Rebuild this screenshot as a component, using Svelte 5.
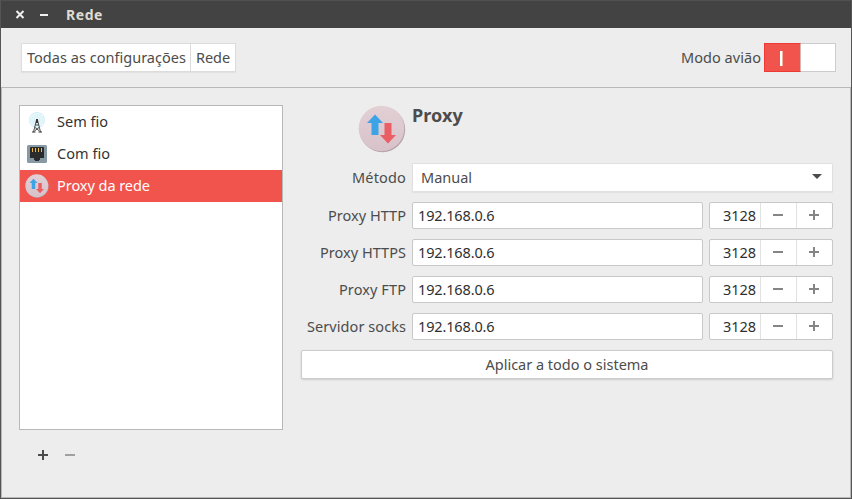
<script>
  const sections = [
    { id: 'wifi', label: 'Sem fio', width: 51 },
    { id: 'wired', label: 'Com fio', width: 53 },
    { id: 'proxy', label: 'Proxy da rede', width: 93 }
  ];
  const selected = 'proxy';
  const proxies = [
    { label: 'Proxy HTTP', width: 78 },
    { label: 'Proxy HTTPS', width: 86 },
    { label: 'Proxy FTP', width: 67 },
    { label: 'Servidor socks', width: 99 }
  ].map((p) => ({ ...p, host: '192.168.0.6', port: '3128' }));

  // Tracks a label so that it fills the given width in pixels.
  function fit(node, width) {
    const natural = node.getBoundingClientRect().width;
    const spacing = (width - natural) / node.textContent.length;
    node.style.letterSpacing = `${spacing}px`;
  }
</script>

{#snippet proxyIcon(size)}
  <svg width={size} height={size} viewBox="0 0 48 48">
    <defs>
      <linearGradient id="disc{size}" x1="0" y1="0" x2="0" y2="1">
        <stop offset="0" stop-color="#e2d0d5" />
        <stop offset="1" stop-color="#d8c2ca" />
      </linearGradient>
    </defs>
    <circle cx="24.400" cy="24.500" r="22.800" fill="#b5a2a8" />
    <circle cx="23.500" cy="23.500" r="22.800" fill="url(#disc{size})" />
    <path d="M17 9.500l8 8.500h-4.500v12h-7V18H9z" fill="#3ba3e6" />
    <path d="M26.500 18h7v12H38l-8 8.500L22 30h4.500z" fill="#ea5f63" />
  </svg>
{/snippet}

{#snippet sign(plus)}
  <svg width="12" height="12" viewBox="0 0 12 12" fill="currentColor">
    <rect x="1" y="5" width="10" height="2" />
    {#if plus}<rect x="5" y="1" width="2" height="10" />{/if}
  </svg>
{/snippet}

<div class="window">
  <header class="titlebar">
    <svg class="controls" width="40" height="12" viewBox="0 0 40 12">
      <path d="M2.500 2l7 7M9.500 2l-7 7" stroke="#f0f0ee" stroke-width="2" />
      <rect x="26" y="5" width="8" height="2" fill="#f0f0ee" />
    </svg>
    <span class="title" use:fit={37}>Rede</span>
  </header>

  <div class="toolbar">
    <nav class="crumbs">
      <div class="crumb all"><span use:fit={159}>Todas as configurações</span></div>
      <div class="crumb"><span use:fit={34}>Rede</span></div>
    </nav>
    <div class="airplane">
      <span use:fit={80}>Modo avião</span>
      <div class="switch"><div class="on"><i></i></div></div>
    </div>
  </div>

  <main>
    <aside>
      <div class="list">
        {#each sections as s}
          <div class="item" class:selected={s.id === selected}>
            <div class="icon">
              {#if s.id === 'wifi'}
                <svg width="20" height="24" viewBox="0 0 20 24">
                  <circle cx="10" cy="10" r="8" fill="#ecf8fb" />
                  <g fill="none" stroke="#c6ebf5" stroke-width=".7">
                    <circle cx="10" cy="10" r="7.500" /><circle cx="10" cy="10" r="5.200" /><circle cx="10" cy="10" r="3" />
                  </g>
                  <path d="M9.500 10L6.500 22M10.500 10L13.500 22M8.500 15h3M8 17.500l4.500 3.500M12 17.500L7.500 21" fill="none" stroke="#3a3a3a" stroke-width=".9" />
                  <path d="M9 9h2v4H9z" fill="#333" />
                  <path d="M5 22h3.500M11.500 22H15" stroke="#333" />
                </svg>
              {:else if s.id === 'wired'}
                <svg width="20" height="18" viewBox="0 0 20 18">
                  <rect width="20" height="18" rx="1.500" fill="#8799a5" />
                  <path d="M4 2h12q1 0 1 1v10h-4v2h-1v1H8v-1H7v-2H3V3q0-1 1-1z" fill="#2b2b2b" />
                  <path d="M5.500 3v4M8.500 3v4M11.500 3v4M14.500 3v4" stroke="#f0b83c" />
                </svg>
              {:else}
                {@render proxyIcon(24)}
              {/if}
            </div>
            <span use:fit={s.width}>{s.label}</span>
          </div>
        {/each}
      </div>
      <div class="actions">
        {@render sign(true)}
        <span class="disabled">{@render sign(false)}</span>
      </div>
    </aside>

    <section>
      <div class="heading">
        {@render proxyIcon(48)}
        <h1><span use:fit={51}>Proxy</span></h1>
      </div>

      <div class="row method">
        <div class="label"><span use:fit={54}>Método</span></div>
        <div class="combo">
          <span use:fit={51}>Manual</span>
          <svg width="10" height="5" viewBox="0 0 10 5"><path d="M0 0h10L5 5z" fill="#4c4c4c" /></svg>
        </div>
      </div>

      {#each proxies as p}
        <div class="row">
          <div class="label"><span use:fit={p.width}>{p.label}</span></div>
          <div class="entry"><span use:fit={76.5}>{p.host}</span></div>
          <div class="spin">
            <div class="port"><span use:fit={33}>{p.port}</span></div>
            <div class="step">{@render sign(false)}</div>
            <div class="step">{@render sign(true)}</div>
          </div>
        </div>
      {/each}

      <div class="apply"><span use:fit={163}>Aplicar a todo o sistema</span></div>
    </section>
  </main>
</div>

<style>
  * { box-sizing: border-box; }
  svg { display: block; flex: none; }
  span { white-space: nowrap; }
  .window {
    width: 852px; height: 499px;
    display: flex; flex-direction: column;
    padding: 0 1px 1px;
    background: #555;
    color: #4c4c4c;
    font: 14.5px/20px "Noto Sans", "Open Sans", sans-serif;
  }
  .titlebar {
    height: 28px; flex: none;
    display: flex; align-items: center;
    padding: 0 0 0 13px;
    background: #434343;
    border-top: 1px solid #505050;
    color: #dfdbd2;
  }
  .controls { margin-right: 12px; }
  .title { font-weight: 700; font-size: 14px; }
  .toolbar {
    height: 59px; flex: none;
    display: flex; justify-content: space-between; align-items: flex-start;
    padding: 15px 15px 0 20px;
    background: #ededed;
  }
  .crumbs {
    display: flex;
    height: 29px;
    background: #fff;
    border: 1px solid #dcdcdc;
    box-shadow: 0 1px 1px #e2e2e2;
  }
  .crumb { width: 44px; padding: 3px 0 0 5px; }
  .crumb.all { width: 169px; border-right: 1px solid #dcdcdc; }
  .airplane { display: flex; gap: 3px; line-height: 29px; }
  .switch { width: 72px; height: 29px; border: 1px solid #ccc; background: #fff; }
  .on {
    width: 37px; height: 29px; margin: -1px;
    display: flex; align-items: center; justify-content: center;
    background: #f1544d; border: 1px solid #ee3a33; border-right-color: #d8b5b2;
  }
  .on i { width: 3px; height: 15px; margin: 1px 2px 0 0; background: #fff; border-right: 1px solid #f8b0a0; }
  main {
    flex: 1;
    display: flex; justify-content: space-between; align-items: flex-start;
    padding: 17px 17px 0;
    background: #ededed;
    border: 1px solid #b8b8b8;
  }
  .list { width: 264px; height: 325px; border: 1px solid #b8b8b8; background: #fff; color: #333; }
  .item { height: 32px; display: flex; align-items: center; padding-left: 5px; }
  .item > span { padding-bottom: 2px; }
  .icon { width: 24px; margin-right: 8px; display: flex; justify-content: center; }
  .selected { background: #f1544d; color: #fff; }
  .actions { display: flex; gap: 15px; padding: 19px 0 0 18px; color: #4c4c4c; }
  .disabled { color: #a0a0a0; }
  section { width: 532px; }
  .heading { display: flex; height: 58px; padding-left: 58px; }
  .heading :global(svg) { margin-left: -1px; }
  h1 { margin: -2px 0 0 6px; font-size: 18px; line-height: 24px; font-weight: 700; }
  .row { display: flex; height: 27px; margin-bottom: 10px; }
  .row.method { height: 29px; }
  .label { width: 105px; margin-right: 6px; text-align: right; line-height: 27px; flex: none; }
  .method .label { line-height: 29px; }
  .combo {
    flex: 1;
    display: flex; align-items: center; justify-content: space-between;
    padding: 0 10px 2px 8px;
    background: #fff; border: 1px solid #e0e0e0; border-radius: 1px;
    box-shadow: 0 1px 1px #e0e0e0;
  }
  .entry, .spin { background: #fff; border: 1px solid #c8c8c8; border-radius: 2px; color: #2f2f2f; line-height: 24px; }
  .entry { width: 291px; padding-left: 5px; margin-right: 6px; }
  .spin { width: 124px; display: flex; }
  .port { width: 50px; padding-left: 13px; }
  .step {
    width: 36px;
    display: flex; align-items: center; justify-content: center;
    border-left: 1px solid #e2e2e2; color: #858585;
    padding: 0 2px 1px 0;
  }
  .apply {
    height: 29px;
    text-align: center; line-height: 26px;
    background: #fff; border: 1px solid #cbcbcb; border-radius: 2px;
    box-shadow: 0 1px 2px #ccc;
  }
</style>
